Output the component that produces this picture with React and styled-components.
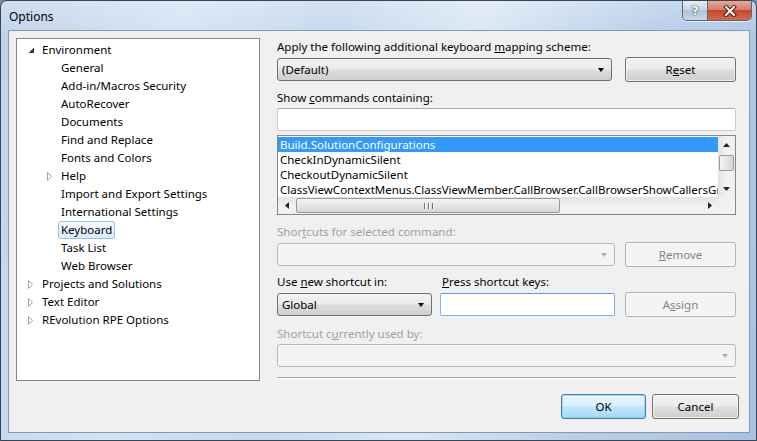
import styled, { createGlobalStyle } from "styled-components";

const GlobalStyle = createGlobalStyle`
  html, body {
    margin: 0;
    padding: 0;
    background: #6f8fb3;
  }
  body {
    font-family: "Noto Sans", "Open Sans", sans-serif;
    font-size: 11.5px;
  }
  * {
    box-sizing: border-box;
  }
`;

const treeNodes = [
  { label: "Environment", level: 0, arrow: "open" },
  { label: "General", level: 1 },
  { label: "Add-in/Macros Security", level: 1 },
  { label: "AutoRecover", level: 1 },
  { label: "Documents", level: 1 },
  { label: "Find and Replace", level: 1 },
  { label: "Fonts and Colors", level: 1 },
  { label: "Help", level: 1, arrow: "closed" },
  { label: "Import and Export Settings", level: 1 },
  { label: "International Settings", level: 1 },
  { label: "Keyboard", level: 1, selected: true },
  { label: "Task List", level: 1 },
  { label: "Web Browser", level: 1 },
  { label: "Projects and Solutions", level: 0, arrow: "closed" },
  { label: "Text Editor", level: 0, arrow: "closed" },
  { label: "REvolution RPE Options", level: 0, arrow: "closed" },
];

const commands = [
  "Build.SolutionConfigurations",
  "CheckInDynamicSilent",
  "CheckoutDynamicSilent",
  "ClassViewContextMenus.ClassViewMember.CallBrowser.CallBrowserShowCallersGraph",
];

export default function App() {
  return (
    <>
      <GlobalStyle />
      <Window>
        <TitleBar>
          <Title>Options</Title>
          <CaptionButtons>
            <HelpButton>?</HelpButton>
            <CloseButton>
              <svg width="14" height="12" viewBox="0 0 14 12">
                <path d="M3 2 L11 10 M11 2 L3 10" stroke="#4a1d14" strokeWidth="4" strokeLinecap="square" />
                <path d="M3 2 L11 10 M11 2 L3 10" stroke="#ffffff" strokeWidth="2" strokeLinecap="square" />
              </svg>
            </CloseButton>
          </CaptionButtons>
        </TitleBar>

        <Client>
          <Main>
            <Tree>
              {treeNodes.map((node) => (
                <TreeRow key={node.label} $level={node.level}>
                  <ArrowBox>
                    {node.arrow === "open" && (
                      <svg width="7" height="7" viewBox="0 0 7 7">
                        <polygon points="6,0.5 6,6 0.5,6" fill="#3c3c3c" />
                      </svg>
                    )}
                    {node.arrow === "closed" && (
                      <svg width="6" height="9" viewBox="0 0 6 9">
                        <polygon points="0.5,0.5 4.5,4.5 0.5,8.5" fill="#ffffff" stroke="#a3a3a3" />
                      </svg>
                    )}
                  </ArrowBox>
                  <NodeLabel $selected={node.selected}>{node.label}</NodeLabel>
                </TreeRow>
              ))}
            </Tree>

            <RightPanel>
              <Label $mt={1}>
                Apply the following additional keyboard <u>m</u>apping scheme:
              </Label>
              <Row $mt={2}>
                <Combo $w={335}>
                  <ComboText>(Default)</ComboText>
                  <DropArrow />
                </Combo>
                <Button $w={111}>
                  R<u>e</u>set
                </Button>
              </Row>

              <Label $mt={8}>
                Show <u>c</u>ommands containing:
              </Label>
              <TextBox $mt={2} />

              <ListBox>
                <ListItems>
                  {commands.map((cmd, i) => (
                    <ListItem key={cmd} $selected={i === 0}>
                      {cmd}
                    </ListItem>
                  ))}
                </ListItems>
                <VScroll>
                  <ScrollArrow>
                    <svg width="7" height="4" viewBox="0 0 7 4">
                      <polygon points="3.5,0 7,4 0,4" fill="#222" />
                    </svg>
                  </ScrollArrow>
                  <VTrack>
                    <VThumb />
                  </VTrack>
                  <ScrollArrow>
                    <svg width="7" height="4" viewBox="0 0 7 4">
                      <polygon points="0,0 7,0 3.5,4" fill="#222" />
                    </svg>
                  </ScrollArrow>
                </VScroll>
                <HScroll>
                  <ScrollArrow>
                    <svg width="4" height="7" viewBox="0 0 4 7">
                      <polygon points="4,0 4,7 0,3.5" fill="#222" />
                    </svg>
                  </ScrollArrow>
                  <HTrack>
                    <HThumb>
                      <Grip />
                      <Grip />
                      <Grip />
                    </HThumb>
                  </HTrack>
                  <ScrollArrow>
                    <svg width="4" height="7" viewBox="0 0 4 7">
                      <polygon points="0,0 4,3.5 0,7" fill="#222" />
                    </svg>
                  </ScrollArrow>
                </HScroll>
                <ScrollCorner />
              </ListBox>

              <Label $mt={9} $disabled>
                Shor<u>t</u>cuts for selected command:
              </Label>
              <Row $mt={2} $gap={10}>
                <Combo $w={338} $disabled>
                  <ComboText />
                  <DropArrow $disabled />
                </Combo>
                <Button $w={111} $disabled>
                  <u>R</u>emove
                </Button>
              </Row>

              <Row $mt={7} $gap={8}>
                <Label $w={157}>
                  Use <u>n</u>ew shortcut in:
                </Label>
                <Label>
                  <u>P</u>ress shortcut keys:
                </Label>
              </Row>
              <Row $mt={2} $gap={8}>
                <Combo $w={157}>
                  <ComboText>Global</ComboText>
                  <DropArrow />
                </Combo>
                <TextBox $w={175} $focused />
                <Button $w={111} $disabled style={{ marginLeft: 2 }}>
                  A<u>s</u>sign
                </Button>
              </Row>

              <Label $mt={9} $disabled>
                Shortcut c<u>u</u>rrently used by:
              </Label>
              <Combo $mt={2} $disabled>
                <ComboText />
                <DropArrow $disabled />
              </Combo>

              <Separator />
            </RightPanel>
          </Main>

          <Footer>
            <Button $w={85} $default>
              OK
            </Button>
            <Button $w={87}>Cancel</Button>
          </Footer>
        </Client>
      </Window>
    </>
  );
}

const Window = styled.div`
  width: 757px;
  height: 441px;
  display: flex;
  flex-direction: column;
  border: 1px solid #3b4452;
  border-radius: 7px 7px 0 0;
  background: linear-gradient(
      180deg,
      rgba(255, 255, 255, 0.25) 0%,
      rgba(255, 255, 255, 0) 8%
    ),
    linear-gradient(
      100deg,
      #bfd3eb 0%,
      #d4e3f4 22%,
      #c4d8ee 40%,
      #dae7f5 58%,
      #b8cfea 78%,
      #a6c3e3 100%
    );
  overflow: hidden;
`;

const TitleBar = styled.div`
  height: 29px;
  display: flex;
  align-items: flex-start;
  padding-left: 8px;
`;

const Title = styled.div`
  flex: 1;
  font-size: 12px;
  line-height: 16px;
  margin-top: 8px;
  color: #000;
`;

const CaptionButtons = styled.div`
  display: flex;
  margin-right: 4px;
  border: 1px solid #5a6676;
  border-top: none;
  border-radius: 0 0 5px 5px;
  overflow: hidden;
  box-shadow: 0 1px 0 rgba(255, 255, 255, 0.6);
`;

const HelpButton = styled.div`
  width: 25px;
  height: 19px;
  display: flex;
  align-items: center;
  justify-content: center;
  font-family: "DejaVu Sans", sans-serif;
  font-weight: bold;
  font-size: 13px;
  color: #fff;
  text-shadow: 0 0 1px #2d3a4c, 0 0 1px #2d3a4c, 0 0 1px #2d3a4c;
  border-right: 1px solid #5a6676;
  background: linear-gradient(
    180deg,
    #e4ecf5 0%,
    #cbd7e6 45%,
    #b2c3d8 50%,
    #c8d6e7 100%
  );
`;

const CloseButton = styled.div`
  width: 43px;
  height: 19px;
  display: flex;
  align-items: center;
  justify-content: center;
  background: linear-gradient(
    180deg,
    #e9a99b 0%,
    #d77c69 45%,
    #c7472d 50%,
    #d06a50 100%
  );
`;

const Client = styled.div`
  flex: 1;
  margin: 0 6px 7px 7px;
  border: 1px solid #8798ad;
  background: #f0f0f0;
  display: flex;
  flex-direction: column;
  padding: 7px 10px 0 7px;
`;

const Main = styled.div`
  display: flex;
  gap: 17px;
`;

const Tree = styled.div`
  width: 244px;
  height: 343px;
  flex: none;
  border: 1px solid #828790;
  background: #fff;
  padding-top: 2px;
`;

const TreeRow = styled.div`
  height: 18px;
  display: flex;
  align-items: center;
  padding-left: ${(p) => 6 + p.$level * 19}px;
`;

const ArrowBox = styled.div`
  width: 16px;
  height: 18px;
  display: flex;
  align-items: center;
  justify-content: center;
`;

const NodeLabel = styled.div`
  height: 18px;
  line-height: 16px;
  padding: 0 2px;
  border: 1px solid ${(p) => (p.$selected ? "#99c0e6" : "transparent")};
  border-radius: 3px;
  background: ${(p) =>
    p.$selected ? "linear-gradient(180deg, #f5faff 0%, #dcecfc 100%)" : "none"};
  color: #000;
  white-space: nowrap;
`;

const RightPanel = styled.div`
  width: 459px;
  display: flex;
  flex-direction: column;
`;

const Label = styled.div`
  height: 16px;
  line-height: 16px;
  margin-top: ${(p) => p.$mt || 0}px;
  width: ${(p) => (p.$w ? `${p.$w}px` : "auto")};
  color: ${(p) => (p.$disabled ? "#a0a0a0" : "#000")};
  white-space: nowrap;
`;

const Row = styled.div`
  display: flex;
  align-items: center;
  gap: ${(p) => (p.$gap != null ? p.$gap : 13)}px;
  margin-top: ${(p) => p.$mt || 0}px;
`;

const Combo = styled.div`
  width: ${(p) => (p.$w ? `${p.$w}px` : "100%")};
  height: 23px;
  margin-top: ${(p) => p.$mt || 0}px;
  display: flex;
  align-items: center;
  padding: 0 0 0 4px;
  border: 1px solid ${(p) => (p.$disabled ? "#b6babd" : "#707070")};
  border-radius: 3px;
  background: ${(p) =>
    p.$disabled
      ? "#f4f4f4"
      : "linear-gradient(180deg, #f2f2f2 0%, #ebebeb 48%, #dddddd 52%, #cfcfcf 100%)"};
`;

const ComboText = styled.div`
  flex: 1;
  line-height: 16px;
  color: #000;
`;

const DropArrow = styled.div`
  width: 0;
  height: 0;
  margin-right: 7px;
  border-left: 3.5px solid transparent;
  border-right: 3.5px solid transparent;
  border-top: 4px solid ${(p) => (p.$disabled ? "#b0b0b0" : "#000")};
`;

const Button = styled.button`
  width: ${(p) => p.$w}px;
  height: 25px;
  flex: none;
  padding: 0;
  font-family: "Noto Sans", "Open Sans", sans-serif;
  font-size: 11.5px;
  border-radius: 3px;
  border: 1px solid
    ${(p) => (p.$disabled ? "#adb2b5" : p.$default ? "#3c7fb1" : "#707070")};
  color: ${(p) => (p.$disabled ? "#838383" : "#000")};
  background: ${(p) =>
    p.$disabled
      ? "#f4f4f4"
      : p.$default
      ? "linear-gradient(180deg, #eaf6fd 0%, #d9f0fc 48%, #bee6fd 52%, #a7d9f5 100%)"
      : "linear-gradient(180deg, #f2f2f2 0%, #ebebeb 48%, #dddddd 52%, #cfcfcf 100%)"};
  box-shadow: ${(p) =>
    p.$default ? "inset 0 0 0 1px rgba(120, 200, 240, 0.6)" : "inset 0 0 0 1px rgba(255,255,255,0.6)"};
`;

const TextBox = styled.div`
  width: ${(p) => (p.$w ? `${p.$w}px` : "100%")};
  height: 23px;
  flex: none;
  margin-top: ${(p) => p.$mt || 0}px;
  background: #fff;
  border: 1px solid ${(p) => (p.$focused ? "#7eb4ea" : "#c9cbcf")};
  border-top-color: ${(p) => (p.$focused ? "#569de5" : "#abadb3")};
  border-radius: 2px;
`;

const ListBox = styled.div`
  height: 80px;
  margin-top: 4px;
  border: 1px solid #828790;
  background: #fff;
  display: grid;
  grid-template-columns: 1fr 17px;
  grid-template-rows: 1fr 17px;
`;

const ListItems = styled.div`
  overflow: hidden;
  padding-top: 1px;
`;

const ListItem = styled.div`
  height: 15px;
  line-height: 15px;
  padding-left: 2px;
  white-space: nowrap;
  color: ${(p) => (p.$selected ? "#fff" : "#000")};
  background: ${(p) => (p.$selected ? "#3399ff" : "transparent")};
`;

const VScroll = styled.div`
  display: flex;
  flex-direction: column;
  background: linear-gradient(90deg, #e4e4e4 0%, #f4f4f4 60%, #eeeeee 100%);
`;

const HScroll = styled.div`
  display: flex;
  background: linear-gradient(180deg, #e4e4e4 0%, #f4f4f4 60%, #eeeeee 100%);
`;

const ScrollCorner = styled.div`
  background: #f0f0f0;
`;

const ScrollArrow = styled.div`
  width: 17px;
  height: 17px;
  flex: none;
  display: flex;
  align-items: center;
  justify-content: center;
`;

const VTrack = styled.div`
  flex: 1;
  padding: 2px 1px 0 1px;
`;

const VThumb = styled.div`
  height: 16px;
  border: 1px solid #9a9a9a;
  border-radius: 2px;
  background: linear-gradient(90deg, #f3f3f3 0%, #e6e6e6 50%, #d6d6d6 100%);
`;

const HTrack = styled.div`
  flex: 1;
  padding: 1px 0 1px 1px;
`;

const HThumb = styled.div`
  width: 264px;
  height: 15px;
  border: 1px solid #9a9a9a;
  border-radius: 2px;
  background: linear-gradient(180deg, #f3f3f3 0%, #e6e6e6 50%, #d6d6d6 100%);
  display: flex;
  justify-content: center;
  align-items: center;
  gap: 1px;
`;

const Grip = styled.div`
  width: 1px;
  height: 6px;
  background: #6f6f6f;
  box-shadow: 1px 0 0 #fff;
  margin: 0 1px;
`;

const Separator = styled.div`
  height: 1px;
  margin-top: 10px;
  background: #a0a0a0;
  box-shadow: 0 1px 0 #fff;
`;

const Footer = styled.div`
  display: flex;
  justify-content: flex-end;
  gap: 6px;
  margin-top: 13px;
`;
